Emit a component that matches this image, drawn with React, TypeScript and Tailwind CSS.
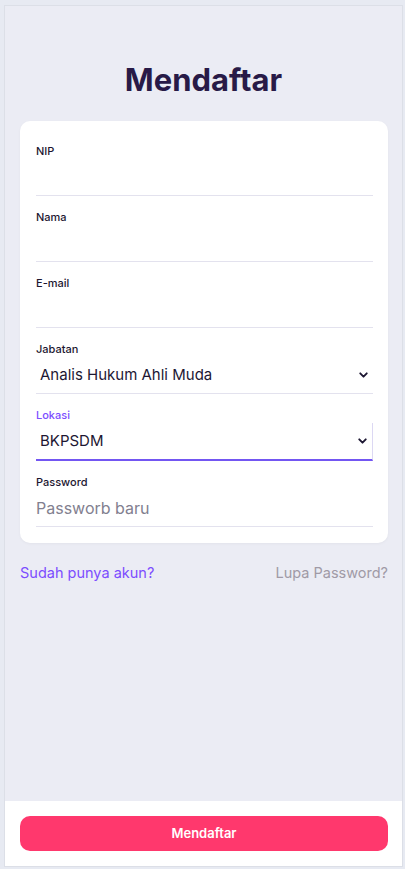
import React from 'react'
import { ChevronDown } from 'lucide-react'

type Field = {
    label: string
    kind: 'text' | 'select' | 'password'
    value?: string
    placeholder?: string
    active?: boolean
}

const fields: Field[] = [
    { label: 'NIP', kind: 'text' },
    { label: 'Nama', kind: 'text' },
    { label: 'E-mail', kind: 'text' },
    { label: 'Jabatan', kind: 'select', value: 'Analis Hukum Ahli Muda' },
    { label: 'Lokasi', kind: 'select', value: 'BKPSDM', active: true },
    { label: 'Password', kind: 'password', placeholder: 'Passworb baru' },
]

const App: React.FC = () => {
    return (
        <div className="h-[869px] bg-[#e7eaf2] pl-[4px] pr-[2px] pt-[5px] pb-[2px] font-['Inter','Noto_Sans',sans-serif]">
            <div className="flex h-full flex-col border border-[#dcdfe7] bg-[#ebecf4]">
                <div className="flex-1">
                    <h1 className="mt-[52px] text-center text-[31px] font-bold leading-[44px] text-[#281a47]">Mendaftar</h1>
                    <div className="ml-[15px] mr-[14px] mt-[19px] rounded-[10px] bg-white pl-4 pr-[15px] pt-[22px] pb-[16px] shadow-[0_1px_3px_rgba(0,0,0,0.04)]">
                        {fields.map((f, i) => (
                            <div key={f.label} className={i === 0 ? '' : 'mt-[13px]'}>
                                <label className={`block text-[11px] font-medium leading-[16px] ${f.active ? 'text-[#7c4dff]' : 'text-[#1c1630]'}`}>
                                    {f.label}
                                </label>
                                {f.kind === 'select' ? (
                                    <div className={`relative flex items-center pl-1 ${f.active ? 'h-[38px] border-b-2 border-r border-b-[#7356f2] border-r-[#dcd8f3]' : 'h-[37px] border-b border-[#e3e2ee]'}`}>
                                        <span className="text-[15px] text-[#1d1733]">{f.value}</span>
                                        <ChevronDown className="absolute right-[3px] top-1/2 -translate-y-1/2 text-[#1d1733]" size={13} strokeWidth={3.5} />
                                    </div>
                                ) : (
                                    <input
                                        type={f.kind}
                                        placeholder={f.placeholder}
                                        className="block h-[37px] w-full border-b border-[#e3e2ee] bg-transparent text-[16px] text-[#1d1733] outline-none placeholder:text-[#82808f]"
                                    />
                                )}
                            </div>
                        ))}
                    </div>
                    <div className="ml-[15px] mr-[14px] mt-[19px] flex items-center justify-between text-[14.5px]">
                        <a className="text-[#7c4dff]" href="#">Sudah punya akun?</a>
                        <a className="text-[#a09aa6]" href="#">Lupa Password?</a>
                    </div>
                </div>
                <div className="bg-white pl-[15px] pr-[14px] pt-[15px] pb-[15px]">
                    <button className="h-[35px] w-full rounded-[10px] bg-[#ff386d] text-[13px] font-semibold text-white">Mendaftar</button>
                </div>
            </div>
        </div>
    )
}

export default App
